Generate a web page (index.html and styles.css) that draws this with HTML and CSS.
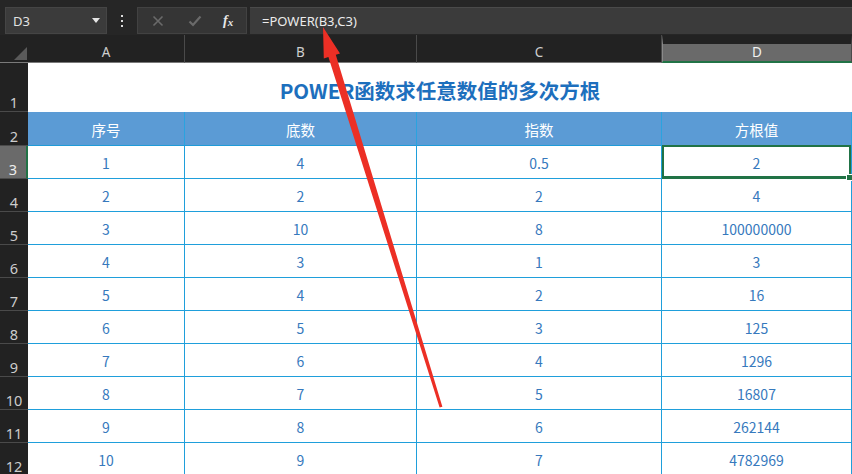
FILE: index.html
```html
<!DOCTYPE html>
<html lang="zh">
<head>
<meta charset="utf-8">
<title>POWER</title>
<link rel="stylesheet" href="styles.css">
</head>
<body>
<div class="app">
  <div class="toolbar">
    <div class="namebox"><span class="ref">D3</span><span class="caret"></span></div>
    <div class="dots"><i></i><i></i><i></i></div>
    <div class="btns">
      <svg class="ico" width="12" height="12" viewBox="0 0 12 12"><path d="M1.5 1.5 L10.5 10.5 M10.5 1.5 L1.5 10.5" stroke="#6a6a6a" stroke-width="1.6" fill="none"/></svg>
      <svg class="ico" width="14" height="12" viewBox="0 0 14 12"><path d="M1.5 6.5 L5 10 L12.5 1.5" stroke="#6a6a6a" stroke-width="2.2" fill="none"/></svg>
      <span class="fx"><i>f</i><b>x</b></span>
    </div>
    <div class="formula">=POWER(B3,C3)</div>
  </div>
  <div class="sheet">
    <div class="corner"><span class="tri"></span></div>
    <div class="colh">A</div>
    <div class="colh">B</div>
    <div class="colh">C</div>
    <div class="colh sel">D</div>

    <div class="rowh">1</div>
    <div class="title">POWER函数求任意数值的多次方根</div>

    <div class="rowh">2</div>
    <div class="hd">序号</div>
    <div class="hd">底数</div>
    <div class="hd">指数</div>
    <div class="hd">方根值</div>

    <div class="rowh sel">3</div>
    <div class="c">1</div><div class="c">4</div><div class="c">0.5</div><div class="c active">2</div>
    <div class="rowh">4</div>
    <div class="c">2</div><div class="c">2</div><div class="c">2</div><div class="c">4</div>
    <div class="rowh">5</div>
    <div class="c">3</div><div class="c">10</div><div class="c">8</div><div class="c">100000000</div>
    <div class="rowh">6</div>
    <div class="c">4</div><div class="c">3</div><div class="c">1</div><div class="c">3</div>
    <div class="rowh">7</div>
    <div class="c">5</div><div class="c">4</div><div class="c">2</div><div class="c">16</div>
    <div class="rowh">8</div>
    <div class="c">6</div><div class="c">5</div><div class="c">3</div><div class="c">125</div>
    <div class="rowh">9</div>
    <div class="c">7</div><div class="c">6</div><div class="c">4</div><div class="c">1296</div>
    <div class="rowh">10</div>
    <div class="c">8</div><div class="c">7</div><div class="c">5</div><div class="c">16807</div>
    <div class="rowh">11</div>
    <div class="c">9</div><div class="c">8</div><div class="c">6</div><div class="c">262144</div>
    <div class="rowh">12</div>
    <div class="c">10</div><div class="c">9</div><div class="c">7</div><div class="c">4782969</div>
  </div>
  <svg class="arrow" width="852" height="474" viewBox="0 0 852 474">
    <polygon points="323,27 340,53.5 335.8,54.8 442.4,406.8 439.6,407.6 328.4,57 323.8,58.4" fill="#ec2f25"/>
  </svg>
</div>
</body>
</html>
```
FILE: styles.css
```css
html, body {
  margin: 0;
  padding: 0;
  background: #222222;
  overflow: hidden;
}
.app {
  position: relative;
  width: 852px;
  height: 474px;
  overflow: hidden;
  font-family: "Noto Sans", "Noto Sans CJK SC", sans-serif;
}
.toolbar {
  height: 35px;
  background: #262626;
  display: flex;
  align-items: flex-start;
  padding-top: 7px;
  box-sizing: border-box;
}
.namebox {
  margin-left: 5px;
  width: 102px;
  height: 27px;
  box-sizing: border-box;
  background: #3b3b3b;
  border: 1px solid #454545;
  display: flex;
  align-items: center;
  justify-content: space-between;
  padding: 0 6px 0 7px;
}
.ref {
  color: #e2e2e2;
  font-size: 13px;
}
.caret {
  width: 0;
  height: 0;
  border-left: 4.5px solid transparent;
  border-right: 4.5px solid transparent;
  border-top: 5px solid #e6e6e6;
}
.dots {
  width: 30px;
  height: 27px;
  display: flex;
  flex-direction: column;
  align-items: center;
  justify-content: center;
  gap: 3px;
}
.dots i {
  width: 2px;
  height: 2px;
  background: #dcdcdc;
  display: block;
}
.btns {
  width: 110px;
  height: 27px;
  box-sizing: border-box;
  background: #353535;
  border: 1px solid #424242;
  display: flex;
  align-items: center;
  padding-left: 14px;
  gap: 0;
}
.btns .ico:first-child { margin-right: 24px; }
.btns .ico:nth-child(2) { margin-right: 21px; }
.fx {
  font-family: "Liberation Serif", "DejaVu Serif", serif;
  font-style: italic;
  font-weight: bold;
  color: #e8e8e8;
  font-size: 14px;
  line-height: 1;
}
.fx b {
  font-size: 11px;
  position: relative;
  top: 1px;
}
.formula {
  margin-left: 3px;
  flex: 1;
  height: 27px;
  box-sizing: border-box;
  background: #3b3b3b;
  border-top: 1px solid #4a4a4a;
  color: #ececec;
  font-size: 13px;
  line-height: 26px;
  padding-left: 12px;
}
.sheet {
  display: grid;
  grid-template-columns: 28px 157px 232px 245px 190px;
  grid-template-rows: 28px 49px 34px repeat(10, 33px);
  background: #ffffff;
  font-family: "Noto Sans CJK SC", "Noto Sans", sans-serif;
}
.corner {
  background: #222222;
  border-bottom: 1px solid #7a7a7a;
  box-sizing: border-box;
  position: relative;
}
.tri {
  position: absolute;
  right: 1px;
  bottom: 2px;
  width: 0;
  height: 0;
  border-left: 13px solid transparent;
  border-bottom: 13px solid #5a5a5a;
}
.colh {
  background: #222222;
  color: #cfcfcf;
  font-size: 13.5px;
  display: flex;
  align-items: flex-end;
  justify-content: center;
  padding-bottom: 1px;
  box-sizing: border-box;
  border-right: 1px solid #4a4a4a;
  border-bottom: 1px solid #7a7a7a;
  background-clip: padding-box;
  font-family: "Noto Sans", sans-serif;
  line-height: 18px;
}
.colh.sel {
  background: #6a6a6a;
  border-top: 9px solid #222222;
  border-left: 1px solid #8a8a8a;
  border-bottom: 2px solid #217346;
  color: #f2f2f2;
  padding-bottom: 0;
}
.rowh {
  background: #222222;
  color: #cdcdcd;
  font-size: 14.5px;
  font-family: "Noto Sans", sans-serif;
  display: flex;
  align-items: flex-end;
  justify-content: center;
  border-bottom: 1px solid #4a4a4a;
  box-sizing: border-box;
  line-height: 18px;
  padding-bottom: 0;
}
.rowh.sel {
  background: #6a6a6a;
  border-right: 2px solid #217346;
  color: #ededed;
}
.title {
  grid-column: 2 / 6;
  display: flex;
  align-items: center;
  justify-content: center;
  color: #1d6fbd;
  font-weight: bold;
  font-size: 20.5px;
  padding-top: 4px;
  box-sizing: border-box;
}
.hd {
  background: #5b9bd5;
  color: #ffffff;
  font-size: 14.5px;
  display: flex;
  align-items: center;
  justify-content: center;
  border-right: 1px solid #2aa3e0;
  border-bottom: 1px solid #1f9bd8;
  box-sizing: border-box;
  padding-top: 2px;
}
.c {
  color: #3679bd;
  font-size: 14px;
  display: flex;
  align-items: center;
  justify-content: center;
  border-right: 1px solid #1f9fdb;
  border-bottom: 1px solid #1f9fdb;
  box-sizing: border-box;
  padding-top: 2px;
}
.c.active {
  position: relative;
  box-shadow: inset 0 0 0 2px #217346;
  border-bottom-color: #217346;
  margin-top: -1px;
}
.c.active::after {
  content: "";
  position: absolute;
  right: -2px;
  bottom: -3px;
  width: 5px;
  height: 5px;
  background: #217346;
  border: 1px solid #ffffff;
}
.arrow {
  position: absolute;
  left: 0;
  top: 0;
  pointer-events: none;
}
```
